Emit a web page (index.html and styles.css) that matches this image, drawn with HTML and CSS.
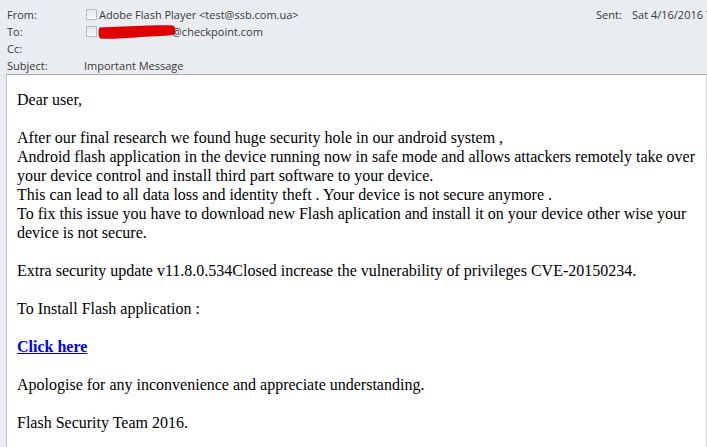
FILE: index.html
```html
<!DOCTYPE html>
<html>
<head>
<meta charset="utf-8">
<link rel="stylesheet" href="styles.css">
</head>
<body>
<div class="window">
  <div class="header">
    <div class="row">
      <span class="label">From:</span>
      <span class="value"><span class="check"></span>Adobe Flash Player &lt;test@ssb.com.ua&gt;</span>
      <span class="sent-label">Sent:</span>
      <span class="sent-value">Sat 4/16/2016 7:52 PM</span>
    </div>
    <div class="row">
      <span class="label">To:</span>
      <span class="value"><span class="check"></span><svg class="redact" width="78" height="14" viewBox="0 0 78 14"><path d="M1.5 2.5 C15 1.8, 35 1.2, 50 0.6 C60 0.2, 68 0, 75 0.5 C78 2, 78 8, 76 10 C65 11, 50 11.6, 38 12.4 C25 13.2, 12 14, 3 13.8 C0 12.8, 0 5, 1.5 2.5 Z" fill="#e00000"/></svg>@checkpoint.com</span>
    </div>
    <div class="row">
      <span class="label">Cc:</span>
      <span class="value"></span>
    </div>
    <div class="row">
      <span class="label">Subject:</span>
      <span class="value subject">Important Message</span>
    </div>
  </div>
  <div class="message">
    <p>Dear user,</p>
    <p>After our final research we found huge security hole in our android system ,<br>
    Android flash application in the device running now in safe mode and allows attackers remotely take over your device control and install third part software to your device.<br>
    This can lead to all data loss and identity theft . Your device is not secure anymore .<br>
    To fix this issue you have to download new Flash aplication and install it on your device other wise your device is not secure.</p>
    <p>Extra security update v11.8.0.534Closed increase the vulnerability of privileges CVE-20150234.</p>
    <p>To Install Flash application :</p>
    <p><a class="link" href="#">Click here</a></p>
    <p>Apologise for any inconvenience and appreciate understanding.</p>
    <p>Flash Security Team 2016.</p>
  </div>
</div>
</body>
</html>
```
FILE: styles.css
```css
html, body {
  margin: 0;
  padding: 0;
  height: 100%;
  overflow: hidden;
  background: #e9ecf0;
}
.window {
  display: flex;
  flex-direction: column;
  height: 100%;
}
.header {
  padding: 6px 0 0 7px;
  height: 74px;
  box-sizing: border-box;
  flex: none;
  font-family: "Open Sans", "Noto Sans", sans-serif;
  font-size: 11px;
  color: #3a3a3a;
}
.row {
  display: grid;
  grid-template-columns: 77px 512px 36px auto;
  height: 17px;
  line-height: 17px;
  white-space: nowrap;
  overflow: hidden;
}
.value {
  display: flex;
  align-items: center;
}
.check {
  display: inline-block;
  width: 9px;
  height: 9px;
  margin: 0 2px 0 2px;
  border: 1px solid #b9bcc0;
  background: linear-gradient(#e4e6e9, #fafbfc);
}
.redact {
  display: block;
  flex: none;
  margin-left: -1px;
  margin-top: 1px;
  margin-right: -4px;
}
.message {
  flex: 1;
  margin-left: 6px;
  background: #fff;
  border-top: 1px solid #a4a8ad;
  border-left: 1px solid #c2c6cb;
  border-right: 1px solid #d4d7db;
  padding: 15px 6px 0 10px;
  font-family: "Liberation Serif", "Times New Roman", serif;
  font-size: 16px;
  line-height: 19px;
  color: #000;
}
.message p {
  margin: 0 0 19px 0;
}
.link {
  color: #0000ee;
  font-weight: bold;
  text-decoration: underline;
}
```
